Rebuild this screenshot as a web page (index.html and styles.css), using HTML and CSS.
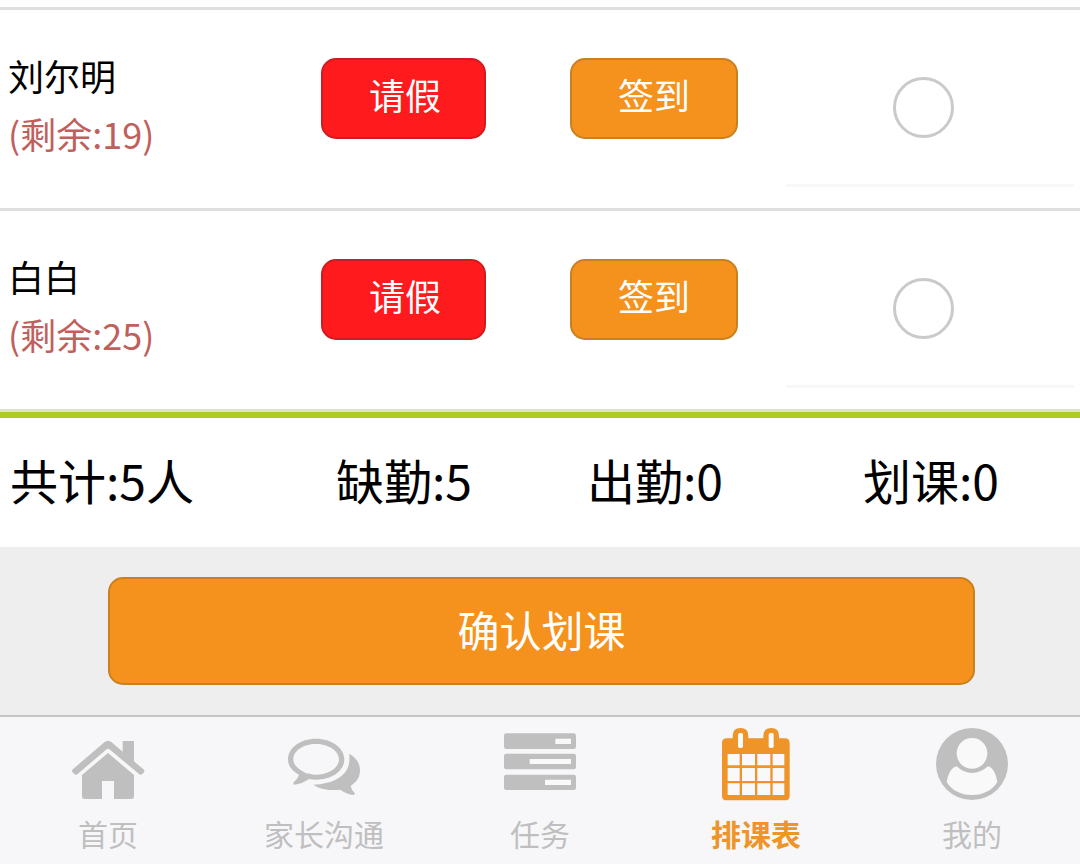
FILE: index.html
```html
<!DOCTYPE html>
<html lang="zh-CN">
<head>
<meta charset="utf-8">
<meta name="viewport" content="width=device-width, initial-scale=1">
<title>排课表</title>
<link rel="stylesheet" href="styles.css">
</head>
<body>
<main class="page">
  <ul class="students">
    <li class="student">
      <div class="info">
        <label class="name" for="pick-1">刘尔明</label>
        <span class="remain">(剩余:19)</span>
      </div>
      <div class="action"><button class="btn leave" type="button">请假</button></div>
      <div class="action"><button class="btn sign" type="button">签到</button></div>
      <div class="pick"><input class="radio" type="radio" id="pick-1" name="pick-1"></div>
    </li>
    <li class="student">
      <div class="info">
        <label class="name" for="pick-2">白白</label>
        <span class="remain">(剩余:25)</span>
      </div>
      <div class="action"><button class="btn leave" type="button">请假</button></div>
      <div class="action"><button class="btn sign" type="button">签到</button></div>
      <div class="pick"><input class="radio" type="radio" id="pick-2" name="pick-2"></div>
    </li>
  </ul>
  <section class="totals">
    <span>共计:5人</span>
    <span>缺勤:5</span>
    <span>出勤:0</span>
    <span>划课:0</span>
  </section>
  <div class="confirm">
    <button class="btn confirm-btn" type="button">确认划课</button>
  </div>
</main>
<nav class="tabs">
  <a class="tab" href="#home">
    <svg class="icon" viewBox="66 54 216 216" aria-hidden="true">
      <path fill="currentColor" d="M67 179 163 97Q174 88 185 97L218 125V93H252V154L282 179Q285 183 281 188L277 192Q272 196 267 192L180 119Q174 114 168 119L83 192Q78 196 73 192L68 187Q64 183 67 179Z"/>
      <path fill="currentColor" d="M174 129 252 195V259Q252 267 244 267H192V213H156V267H104Q96 267 96 259V195Z"/>
    </svg>
    <span>首页</span>
  </a>
  <a class="tab" href="#chat">
    <svg class="icon" viewBox="114 54 216 216" aria-hidden="true">
      <path fill="currentColor" fill-rule="evenodd" d="M198 86C245 86 283 113 283 148S245 209 198 209Q187 209 177 207Q155 222 134 224Q128 223 131 217Q142 209 147 194C126 183 114 167 114 148C114 113 151 86 198 86ZM198 102C160 102 130 122 130 148C130 162 141 175 157 183L168 190L179 191Q188 194 198 194C236 194 267 173 267 148S236 102 198 102Z"/>
      <path fill="currentColor" d="M298 131C319 143 330 160 330 181C330 202 320 216 302 227Q304 239 314 249Q316 255 310 255Q289 252 271 239C237 243 208 237 190 224C251 223 298 194 298 151Z"/>
    </svg>
    <span>家长沟通</span>
  </a>
  <a class="tab" href="#tasks">
    <svg class="icon" viewBox="72 54 216 216" aria-hidden="true">
      <g fill="currentColor">
        <rect x="72" y="70" width="216" height="47" rx="7"/>
        <rect x="72" y="131" width="216" height="47" rx="7"/>
        <rect x="72" y="194" width="216" height="46" rx="7"/>
      </g>
      <path class="hole" d="M226 86H273V102H226ZM149 147H273V162H149ZM195 209H273V225H195Z"/>
    </svg>
    <span>任务</span>
  </a>
  <a class="tab active" href="#schedule" aria-current="page">
    <svg class="icon" viewBox="90 54 216 216" aria-hidden="true">
      <path fill="currentColor" d="M110 85H128V77Q128 54 152 54Q175 54 175 77V85H220V77Q220 54 244 54Q267 54 267 77V85H285Q299 85 299 99V257Q299 271 285 271H110Q96 271 96 257V99Q96 85 110 85Z"/>
      <path class="hole" d="M113 132H149V166H113ZM156 132H195V166H156ZM202 132H241V166H202ZM248 132H283V166H248ZM113 174H149V213H113ZM156 174H195V213H156ZM202 174H241V213H202ZM248 174H283V213H248ZM113 220H149V255H113ZM156 220H195V255H156ZM202 220H241V255H202ZM248 220H283V255H248Z"/>
      <rect class="hole" x="144" y="69" width="15" height="45" rx="5"/>
      <rect class="hole" x="236" y="69" width="15" height="45" rx="5"/>
    </svg>
    <span>排课表</span>
  </a>
  <a class="tab" href="#me">
    <svg class="icon" viewBox="78 54 216 216" aria-hidden="true">
      <circle fill="currentColor" cx="186" cy="162" r="108"/>
      <circle class="hole" cx="186" cy="130" r="46"/>
      <path class="hole" d="M140 169Q160 189 186 189T234 169Q255 174 262 216C247 241 220 255 186 255S125 241 110 216Q117 174 140 169Z"/>
    </svg>
    <span>我的</span>
  </a>
</nav>
</body>
</html>
```
FILE: styles.css
```css
* {
  box-sizing: border-box;
}

body {
  margin: 0;
  min-height: 100vh;
  display: flex;
  flex-direction: column;
  background: #eeeeee;
  color: #000;
  font-family: "Noto Sans CJK SC", "Noto Sans", sans-serif;
}

.page {
  flex: 1;
}

.students {
  margin: 0;
  padding: 7px 0 0;
  list-style: none;
  background: #fff;
  border-bottom: 3px solid #dde3cc;
}

.student {
  display: grid;
  grid-template-columns: 321fr 249fr 216fr 294fr;
  align-items: start;
  border-top: 3px solid #dfdfdf;
  min-height: 201px;
}

.info {
  display: flex;
  flex-direction: column;
  padding: 36px 0 0 8px;
  font-size: 36px;
  line-height: 58px;
}

.remain {
  color: #c0605c;
}

.action {
  padding-top: 48px;
}

.btn {
  display: block;
  border: 2px solid #c9801f;
  border-radius: 15px;
  background: #f5921e;
  color: #fff;
  font-family: inherit;
  font-size: 36px;
  line-height: 54px;
  padding: 7px 46px 16px;
}

.leave {
  padding-right: 43px;
  background: #ff1a1d;
  border-color: #d01c1e;
}

.pick {
  display: flex;
  justify-content: center;
  margin-right: 6px;
  padding: 67px 14px 46px 0;
  border-bottom: 3px solid #f8f8f8;
}

.radio {
  appearance: none;
  width: 61px;
  height: 61px;
  margin: 0;
  border: 3px solid #cacaca;
  border-radius: 50%;
  background: #fff;
}

.radio:checked {
  background: #f5921e;
}

.totals {
  display: grid;
  grid-template-columns: 326fr 251fr 276fr 217fr;
  padding: 25px 0 32px 10px;
  border-top: 6px solid #adcb22;
  background: #fff;
  font-size: 48px;
  line-height: 72px;
}

.confirm {
  padding: 30px 105px 30px 108px;
}

.confirm-btn {
  width: 100%;
  padding: 18px 20px 22px;
  font-size: 42px;
  line-height: 64px;
}

.tabs {
  display: grid;
  grid-template-columns: repeat(5, 1fr);
  padding: 11px 0 11px;
  border-top: 2px solid #c6c6c6;
  background: #f7f7f9;
}

.tab {
  display: flex;
  flex-direction: column;
  align-items: center;
  gap: 13px;
  color: #bfbfbf;
  font-size: 30px;
  line-height: 40px;
  text-decoration: none;
}

.icon {
  width: 72px;
  height: 72px;
  overflow: visible;
}

.hole {
  fill: #f9f9fa;
}

.active {
  color: #ee9428;
  font-weight: 700;
}
```
